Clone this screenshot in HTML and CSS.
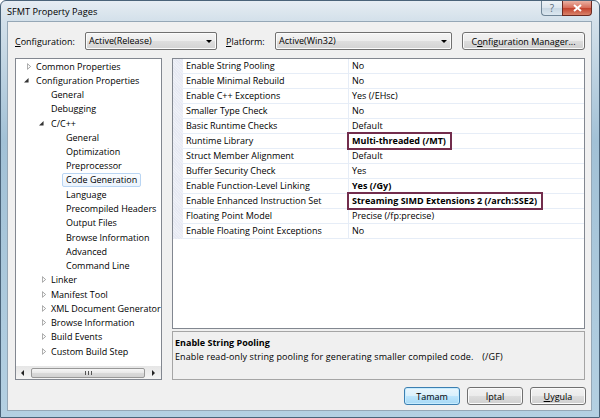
FILE: index.html
```html
<!DOCTYPE html>
<html lang="en">
<head>
    <meta charset="UTF-8">
    <title>SFMT Property Pages</title>
    <link rel="stylesheet" href="styles.css">
</head>
<body>
    <svg width="0" height="0" class="defs">
        <symbol id="tri-closed" viewBox="0 0 5 8"><path d="M0.5 0.5 L4.5 4 L0.5 7.5 Z" fill="#fff" stroke="#8e8f8f"/></symbol>
        <symbol id="tri-open" viewBox="0 0 6 6"><path d="M5.5 0 V5.5 H0 Z" fill="#333"/></symbol>
    </svg>
    <div class="window">
        <div class="titlebar">
            <span class="title">SFMT Property Pages</span>
            <div class="caption">
                <span class="cap-btn help">?</span>
                <span class="cap-btn close">
                    <svg width="9" height="8" viewBox="0 0 9 8"><path d="M1 1 L8 7 M8 1 L1 7" stroke="#fff" stroke-width="2"/></svg>
                </span>
            </div>
        </div>

        <div class="client">
            <div class="config-row">
                <span class="lbl lbl-config"><u>C</u>onfiguration:</span>
                <div class="combo combo-config">Active(Release)<span class="drop"></span></div>
                <span class="lbl lbl-platform"><u>P</u>latform:</span>
                <div class="combo combo-platform">Active(Win32)<span class="drop"></span></div>
                <button class="btn btn-manager">C<u>o</u>nfiguration Manager...</button>
            </div>

            <div class="main">
                <div class="tree">
                    <ul class="nodes">
                        <li class="node l0"><svg class="tw closed"><use href="#tri-closed"/></svg>Common Properties</li>
                        <li class="node l0"><svg class="tw open"><use href="#tri-open"/></svg>Configuration Properties</li>
                        <li class="node l1"><span class="tw"></span>General</li>
                        <li class="node l1"><span class="tw"></span>Debugging</li>
                        <li class="node l1"><svg class="tw open"><use href="#tri-open"/></svg>C/C++</li>
                        <li class="node l2"><span class="tw"></span>General</li>
                        <li class="node l2"><span class="tw"></span>Optimization</li>
                        <li class="node l2"><span class="tw"></span>Preprocessor</li>
                        <li class="node l2"><span class="tw"></span><span class="selected">Code Generation</span></li>
                        <li class="node l2"><span class="tw"></span>Language</li>
                        <li class="node l2"><span class="tw"></span>Precompiled Headers</li>
                        <li class="node l2"><span class="tw"></span>Output Files</li>
                        <li class="node l2"><span class="tw"></span>Browse Information</li>
                        <li class="node l2"><span class="tw"></span>Advanced</li>
                        <li class="node l2"><span class="tw"></span>Command Line</li>
                        <li class="node l1"><svg class="tw closed"><use href="#tri-closed"/></svg>Linker</li>
                        <li class="node l1"><svg class="tw closed"><use href="#tri-closed"/></svg>Manifest Tool</li>
                        <li class="node l1"><svg class="tw closed"><use href="#tri-closed"/></svg>XML Document Generator</li>
                        <li class="node l1"><svg class="tw closed"><use href="#tri-closed"/></svg>Browse Information</li>
                        <li class="node l1"><svg class="tw closed"><use href="#tri-closed"/></svg>Build Events</li>
                        <li class="node l1"><svg class="tw closed"><use href="#tri-closed"/></svg>Custom Build Step</li>
                    </ul>
                    <div class="hscroll">
                        <span class="arrow arrow-left"></span>
                        <span class="thumb"><span class="grip"></span></span>
                        <span class="arrow arrow-right"></span>
                    </div>
                </div>

                <div class="right">
                    <div class="grid">
                        <div class="prop"><span class="gutter"></span><span class="name">Enable String Pooling</span><span class="value">No</span></div>
                        <div class="prop"><span class="gutter"></span><span class="name">Enable Minimal Rebuild</span><span class="value">No</span></div>
                        <div class="prop"><span class="gutter"></span><span class="name">Enable C++ Exceptions</span><span class="value">Yes (/EHsc)</span></div>
                        <div class="prop"><span class="gutter"></span><span class="name">Smaller Type Check</span><span class="value">No</span></div>
                        <div class="prop"><span class="gutter"></span><span class="name">Basic Runtime Checks</span><span class="value">Default</span></div>
                        <div class="prop"><span class="gutter"></span><span class="name">Runtime Library</span><span class="value"><b class="mark">Multi-threaded (/MT)</b></span></div>
                        <div class="prop"><span class="gutter"></span><span class="name">Struct Member Alignment</span><span class="value">Default</span></div>
                        <div class="prop"><span class="gutter"></span><span class="name">Buffer Security Check</span><span class="value">Yes</span></div>
                        <div class="prop"><span class="gutter"></span><span class="name">Enable Function-Level Linking</span><span class="value"><b>Yes (/Gy)</b></span></div>
                        <div class="prop"><span class="gutter"></span><span class="name">Enable Enhanced Instruction Set</span><span class="value"><b class="mark">Streaming SIMD Extensions 2 (/arch:SSE2)</b></span></div>
                        <div class="prop"><span class="gutter"></span><span class="name">Floating Point Model</span><span class="value">Precise (/fp:precise)</span></div>
                        <div class="prop"><span class="gutter"></span><span class="name">Enable Floating Point Exceptions</span><span class="value">No</span></div>
                    </div>
                    <div class="desc">
                        <div class="desc-title">Enable String Pooling</div>
                        <div class="desc-text">Enable read-only string pooling for generating smaller compiled code.<span class="tab"></span>(/GF)</div>
                    </div>
                </div>
            </div>

            <div class="buttons">
                <button class="btn btn-default">Tamam</button>
                <button class="btn">İptal</button>
                <button class="btn"><u>U</u>ygula</button>
            </div>
        </div>
    </div>
</body>
</html>
```

FILE: styles.css
```css
body {
    margin: 0;
    font-family: "Open Sans", "Noto Sans", sans-serif;
    font-size: 9px;
    color: #000;
}
.defs {
    position: absolute;
}
.window {
    width: 600px;
    height: 418px;
    box-sizing: border-box;
    border: 1px solid #4a6379;
    border-radius: 6px 6px 0 0;
    background: linear-gradient(#e6edf3, #d3e0ea 20px, #a2c1d6 140px, #b4d0e2);
    overflow: hidden;
}

/* title bar */
.titlebar {
    height: 20px;
    display: flex;
    justify-content: space-between;
}
.title {
    padding-left: 6px;
    line-height: 21px;
    font-size: 9.2px;
}
.caption {
    display: flex;
    margin-right: 7px;
    height: 15px;
}
.cap-btn {
    height: 15px;
    box-sizing: border-box;
    display: flex;
    align-items: center;
    justify-content: center;
}
.help {
    width: 21px;
    border: 1px solid #6f8597;
    border-top: none;
    border-right: none;
    border-radius: 0 0 0 4px;
    background: linear-gradient(#eef3f7, #dbe5ed 50%, #c7d6e2 50%, #dbe7f0);
    color: #5a6b79;
    font-size: 10px;
}
.close {
    width: 30px;
    border: 1px solid #6b2a22;
    border-top: none;
    border-radius: 0 0 4px 0;
    background: linear-gradient(#eab1a3, #d66a57 50%, #c2402b 50%, #d9826a);
}

/* client area */
.client {
    margin: 0 7px 0 6px;
    height: 390px;
    box-sizing: border-box;
    border: 1px solid #95a7b6;
    background: #f0f0f0;
}
.config-row {
    display: flex;
    align-items: center;
    height: 18px;
    margin-top: 10px;
    padding-left: 7px;
}
.lbl-config {
    width: 70px;
}
.lbl-platform {
    width: 49px;
    margin-left: 9px;
}
.combo {
    position: relative;
    height: 18px;
    box-sizing: border-box;
    border: 1px solid #707070;
    border-radius: 2px;
    background: linear-gradient(#f4f4f4, #ececec 50%, #dfdfdf 50%, #d3d3d3);
    box-shadow: inset 0 0 0 1px #fbfbfb;
    padding-left: 3px;
    line-height: 16px;
}
.combo-config {
    width: 132px;
}
.combo-platform {
    width: 177px;
}
.drop {
    position: absolute;
    right: 4px;
    top: 7px;
    border-left: 3px solid transparent;
    border-right: 3px solid transparent;
    border-top: 3px solid #000;
}
.btn {
    height: 18px;
    box-sizing: border-box;
    border: 1px solid #707070;
    border-radius: 3px;
    background: linear-gradient(#f2f2f2, #ebebeb 50%, #dddddd 50%, #cfcfcf);
    box-shadow: inset 0 0 0 1px #fbfbfb;
    font-family: inherit;
    font-size: 9px;
    color: #000;
    padding: 0;
}
.btn-manager {
    width: 123px;
    margin-left: 10px;
}

/* main split */
.main {
    display: flex;
    gap: 10px;
    height: 322px;
    margin-top: 8px;
    padding-left: 7px;
}

/* tree */
.tree {
    width: 147px;
    box-sizing: border-box;
    border: 1px solid #828790;
    background: #fff;
    display: flex;
    flex-direction: column;
    overflow: hidden;
}
.nodes {
    list-style: none;
    margin: 0;
    padding: 0;
    flex: 1;
}
.node {
    display: flex;
    align-items: center;
    height: 14.25px;
    white-space: nowrap;
}
.node.l0 { padding-left: 10px; }
.node.l1 { padding-left: 25px; }
.node.l2 { padding-left: 40px; }
.tw {
    flex: none;
    width: 10px;
    height: 8px;
}
.tw.closed {
    width: 4px;
    height: 7px;
    margin-left: 1px;
    margin-right: 5px;
}
.tw.open {
    width: 5px;
    height: 5px;
    margin-left: -2px;
    margin-right: 7px;
}
.selected {
    margin-left: -4px;
    padding: 0 3px;
    line-height: 12px;
    border: 1px solid #b9d5f3;
    border-radius: 2px;
    background: linear-gradient(#fbfdff, #eaf3fd);
}
.hscroll {
    height: 13px;
    display: flex;
    align-items: center;
    background: linear-gradient(#e6e6e6, #f4f4f4);
    flex: none;
}
.arrow {
    width: 13px;
    display: flex;
    justify-content: center;
}
.arrow-left::before,
.arrow-right::before {
    content: "";
    border-top: 3px solid transparent;
    border-bottom: 3px solid transparent;
}
.arrow-left::before { border-right: 3px solid #222; }
.arrow-right::before { border-left: 3px solid #222; }
.thumb {
    width: 114px;
    height: 10px;
    margin: 0 2px;
    box-sizing: border-box;
    border: 1px solid #989898;
    border-radius: 2px;
    background: linear-gradient(#f6f6f6, #e8e8e8 50%, #dadada 50%, #d2d2d2);
    display: flex;
    align-items: center;
    justify-content: center;
}
.grip {
    width: 7px;
    height: 4px;
    background: repeating-linear-gradient(90deg, #555 0 1px, transparent 1px 3px);
}

/* property grid */
.right {
    width: 413px;
    display: flex;
    flex-direction: column;
    gap: 2px;
}
.grid {
    height: 271px;
    box-sizing: border-box;
    border: 1px solid #828790;
    background: #fff;
    flex: none;
}
.prop {
    display: flex;
    height: 15px;
}
.gutter {
    width: 10px;
    background: repeating-linear-gradient(45deg, #e7e9f3 0 1px, #eef0f7 1px 2px);
    flex: none;
}
.name,
.value {
    box-sizing: border-box;
    border-bottom: 1px solid #e6edf7;
    padding-left: 3px;
    line-height: 14px;
    white-space: nowrap;
}
.name {
    width: 166px;
    border-right: 1px solid #e6edf7;
    flex: none;
}
.value {
    flex: 1;
    display: flex;
    align-items: center;
}
.mark {
    position: relative;
    z-index: 1;
    margin-left: -5px;
    padding: 0 4px 0 3px;
    height: 18px;
    box-sizing: border-box;
    border: 2px solid #722d4d;
    background: #fff;
    line-height: 14px;
}

/* description */
.desc {
    flex: 1;
    box-sizing: border-box;
    border: 1px solid #a5a5a5;
    padding: 4px 0 0 2px;
    line-height: 14px;
}
.desc-title {
    font-weight: bold;
}
.desc-text {
    white-space: nowrap;
    letter-spacing: 0.1px;
}
.tab {
    display: inline-block;
    width: 9px;
}

/* dialog buttons */
.buttons {
    display: flex;
    justify-content: flex-end;
    gap: 7px;
    margin-top: 7px;
    padding-right: 5px;
}
.buttons .btn {
    width: 56px;
}
.btn-default {
    border-color: #3c7fb1;
    background: linear-gradient(#eaf6fd, #d9f0fc 50%, #bee6fd 50%, #a7d9f5);
    box-shadow: inset 0 0 0 1px #c6ecff;
}
```
